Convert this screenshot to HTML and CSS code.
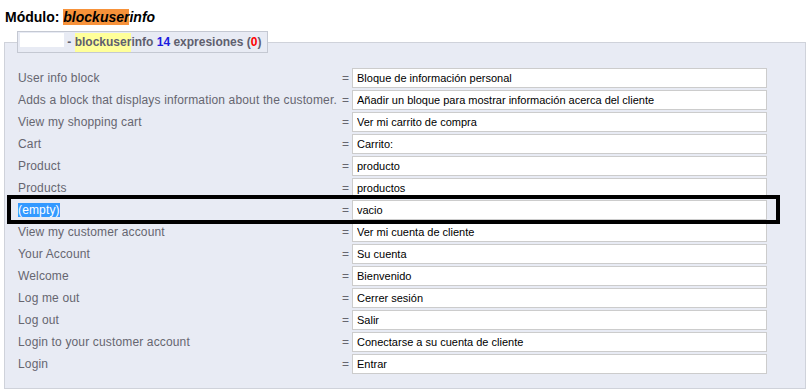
FILE: index.html
```html
<!DOCTYPE html>
<html>
<head>
<meta charset="utf-8">
<link rel="stylesheet" href="styles.css">
</head>
<body>
<h2 class="title">Módulo: <em><span class="hl-orange">blockuser</span>info</em></h2>
<fieldset class="box">
  <legend class="legend"><span class="blank"></span> - <span class="hl-yellow">blockuser</span>info <span class="count">14</span> expresiones (<span class="zero">0</span>)</legend>
  <div class="rows">
    <div class="row"><span class="lbl">User info block</span><span class="eq">=</span><input class="val" value="Bloque de información personal"></div>
    <div class="row"><span class="lbl">Adds a block that displays information about the customer.</span><span class="eq">=</span><input class="val" value="Añadir un bloque para mostrar información acerca del cliente"></div>
    <div class="row"><span class="lbl">View my shopping cart</span><span class="eq">=</span><input class="val" value="Ver mi carrito de compra"></div>
    <div class="row"><span class="lbl">Cart</span><span class="eq">=</span><input class="val" value="Carrito:"></div>
    <div class="row"><span class="lbl">Product</span><span class="eq">=</span><input class="val" value="producto"></div>
    <div class="row"><span class="lbl">Products</span><span class="eq">=</span><input class="val" value="productos"></div>
    <div class="row marked"><span class="lbl"><span class="sel">(empty)</span></span><span class="eq">=</span><input class="val" value="vacio"></div>
    <div class="row"><span class="lbl">View my customer account</span><span class="eq">=</span><input class="val" value="Ver mi cuenta de cliente"></div>
    <div class="row"><span class="lbl">Your Account</span><span class="eq">=</span><input class="val" value="Su cuenta"></div>
    <div class="row"><span class="lbl">Welcome</span><span class="eq">=</span><input class="val" value="Bienvenido"></div>
    <div class="row"><span class="lbl">Log me out</span><span class="eq">=</span><input class="val" value="Cerrer sesión"></div>
    <div class="row"><span class="lbl">Log out</span><span class="eq">=</span><input class="val" value="Salir"></div>
    <div class="row"><span class="lbl">Login to your customer account</span><span class="eq">=</span><input class="val" value="Conectarse a su cuenta de cliente"></div>
    <div class="row"><span class="lbl">Login</span><span class="eq">=</span><input class="val" value="Entrar"></div>
  </div>
</fieldset>
</body>
</html>
```
FILE: styles.css
```css
html, body {
  margin: 0;
  padding: 0;
  background: #ffffff;
  font-family: "Liberation Sans", Arial, sans-serif;
}
.title {
  margin: 0;
  padding: 8px 0 0 5px;
  font-size: 14px;
  line-height: 19px;
  font-weight: bold;
  color: #000;
}
.title em {
  font-style: italic;
}
.hl-orange {
  background: #f7923a;
}
.box {
  margin: 4px 0 0 4px;
  width: 802px;
  box-sizing: border-box;
  padding: 0 0 14px 0;
  border: 1px solid #cfd2da;
  background: #e8ebf4;
  position: relative;
}
.legend {
  margin-left: 12px;
  padding: 0 6px 0 2px;
  height: 22px;
  box-sizing: border-box;
  border: 1px solid #c4c8d2;
  background: #e8ebf4;
  font-size: 12px;
  font-weight: bold;
  line-height: 19px;
  color: #5f5f6f;
  display: flex;
  align-items: center;
  white-space: pre;
}
.blank {
  display: inline-block;
  width: 44px;
  height: 14px;
  background: #fff;
  margin-top: -4px;
}
.hl-yellow {
  background: #ffff99;
}
.count {
  color: #1a1adf;
}
.zero {
  color: #ff0000;
}
.rows {
  display: flex;
  flex-direction: column;
  gap: 2px;
  padding: 15px 0 0 13px;
}
.row {
  display: grid;
  grid-template-columns: 320px 14px 415px;
  align-items: center;
  height: 20px;
}
.lbl {
  font-size: 12px;
  letter-spacing: 0.15px;
  color: #666670;
  white-space: nowrap;
}
.eq {
  font-size: 12px;
  color: #666670;
  padding-left: 4px;
}
.val {
  box-sizing: border-box;
  height: 20px;
  width: 415px;
  margin: 0;
  border: 1px solid #cccccc;
  background: #fff;
  padding: 0 4px;
  font-family: "Liberation Sans", Arial, sans-serif;
  font-size: 11px;
  color: #000;
  outline: none;
}
.sel {
  background: #3399ff;
  color: #fff;
}
.marked {
  position: relative;
}
.marked::after {
  content: "";
  position: absolute;
  left: -11px;
  top: -5px;
  width: 773px;
  height: 29px;
  box-sizing: border-box;
  border: 4px solid #000;
  pointer-events: none;
}
```
